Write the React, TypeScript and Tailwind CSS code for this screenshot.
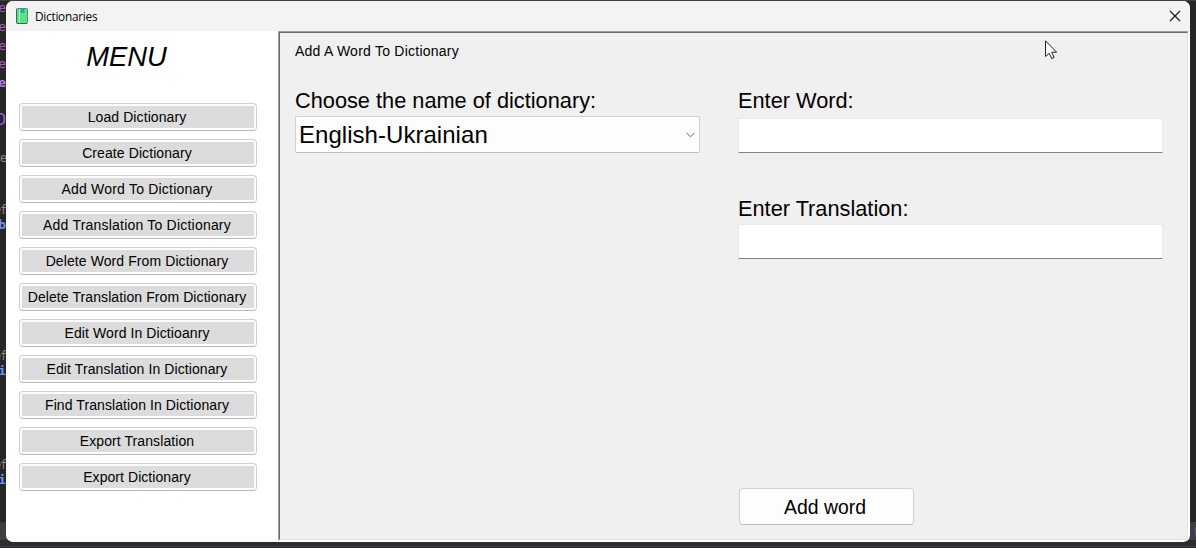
import React from "react";

const menu = [
  { label: "Load Dictionary", tracking: "tracking-[0.09px]" },
  { label: "Create Dictionary", tracking: "tracking-[0.09px]" },
  { label: "Add Word To Dictionary", tracking: "tracking-[0.2px]" },
  { label: "Add Translation To Dictionary", tracking: "tracking-[0.21px]" },
  { label: "Delete Word From Dictionary", tracking: "tracking-[0.09px]" },
  { label: "Delete Translation From Dictionary", tracking: "tracking-[0.09px]" },
  { label: "Edit Word In Dictioanry", tracking: "tracking-[0.09px]" },
  { label: "Edit Translation In Dictionary", tracking: "tracking-[0.09px]" },
  { label: "Find Translation In Dictionary", tracking: "tracking-[0.09px]" },
  { label: "Export Translation", tracking: "tracking-[0.09px]" },
  { label: "Export Dictionary", tracking: "tracking-[0.06px]" },
];

const code = [
  { text: "e", style: "top-[-1px] right-0 text-[#9a62c8]" },
  { text: "e", style: "top-[18px] right-0 text-[#9a62c8]" },
  { text: "e", style: "top-[37px] right-0 text-[#9a62c8]" },
  { text: "e", style: "top-[55px] right-0 text-[#9a62c8]" },
  { text: "e", style: "top-[74px] right-0 text-[#b27cf0] font-bold" },
  { text: "D", style: "top-[111px] right-0 text-[#9a62e8] text-[15px]" },
  { text: "te", style: "top-[149px] right-0 text-[#8a8a8a] text-[12px] tracking-[-1.2px]" },
  { text: "ef", style: "top-[201px] right-0 text-[#8a8a8a] text-[12px] tracking-[-1.2px]" },
  { text: "b", style: "top-[216px] right-0 text-[#6c95eb] font-bold" },
  { text: "ef", style: "top-[347px] right-0 text-[#8a8a8a] text-[12px] tracking-[-1.2px]" },
  { text: "i", style: "top-[362px] right-0 text-[#6c95eb] font-bold" },
  { text: "ef", style: "top-[456px] right-0 text-[#8a8a8a] text-[12px] tracking-[-1.2px]" },
  { text: "i", style: "top-[471px] right-0 text-[#6c95eb] font-bold" },
];

function Backdrop() {
  return (
    <div className="absolute inset-0 flex flex-col">
      <div className="h-px bg-[#403f42]" />
      <div className="h-[521px] bg-[#262626]" />
      <div className="h-[18px] bg-[#3d3d42]" />
      <div className="h-[6px] bg-[#2d2d31]" />
      <div className="h-px bg-[#414145]" />
      <div className="h-px bg-[#252527]" />
      <div className="absolute inset-y-0 left-0 w-[6px] overflow-hidden font-['DejaVu_Sans_Mono',monospace] text-[13px] leading-[18px]">
        {code.map((c, i) => (
          <span key={i} className={`absolute leading-[18px] ${c.style}`}>{c.text}</span>
        ))}
      </div>
      <div className="absolute top-[527px] right-0 h-[8px] w-px bg-[#5550a5]" />
    </div>
  );
}

function BookIcon() {
  return (
    <svg width="12" height="16" viewBox="0 0 12 16">
      <rect x="0.5" y="0.5" width="11" height="15" rx="1" fill="#62df82" stroke="#3f9a78" />
      <path d="M0.5 1v14M1 15.5h10" stroke="#286b61" />
      <path d="M3.5 1v13.5" stroke="#9af8a6" strokeWidth="1" />
      <path d="M5 0h3v5L6.5 3.6 5 5z" fill="#2aa9e8" stroke="#1b708e" strokeWidth="0.4" />
    </svg>
  );
}

function Field({ label, className }: { label: string; className: string }) {
  return (
    <label className={`flex w-[425px] flex-col ${className}`}>
      <span className="text-[21.75px] leading-[26px]">{label}</span>
      <input className="block h-[35px] w-[425px] border border-[#e9e9e9] border-b-[#858585] bg-white px-1 text-2xl outline-none" />
    </label>
  );
}

export default function App() {
  return (
    <div className="relative h-[548px] w-[1196px] overflow-hidden pt-px pl-[6px] font-['Liberation_Sans',Arial,sans-serif] text-black">
      <Backdrop />
      <div className="relative flex h-[541px] w-[1184px] flex-col overflow-hidden rounded-[7px] bg-white">
        <header className="flex h-[30px] shrink-0 items-center bg-[#f3f3f3] pr-[9px] pl-[10px]">
          <BookIcon />
          <span className="ml-[7px] font-['Open_Sans','Noto_Sans',sans-serif] text-[11.8px] leading-[16px] tracking-[-0.25px]">Dictionaries</span>
          <button className="ml-auto" aria-label="Close">
            <svg width="12" height="12" viewBox="0 0 12 12" fill="none" stroke="#1a1a1a" strokeWidth="1.15">
              <path d="M1 1l10 10M11 1L1 11" />
            </svg>
          </button>
        </header>
        <div className="flex min-h-0 flex-1">
          <nav className="flex w-[272px] shrink-0 flex-col pl-[13px]">
            <h1 className="mt-[9px] h-[34px] w-[215px] text-center text-[27.4px] leading-[34px] italic">MENU</h1>
            <div className="mt-[29px] flex flex-col gap-2">
              {menu.map((m) => (
                <button key={m.label} className="h-[28px] w-[238px] rounded-[4px] border border-[#d0d0d0] border-b-[#bababa] bg-[#fdfdfd] p-[2px]">
                  <span className={`flex h-[22px] items-center justify-center bg-[#dcdcdc] pt-px pr-[2px] text-[14px] leading-[21px] whitespace-nowrap ${m.tracking}`}>
                    {m.label}
                  </span>
                </button>
              ))}
            </div>
          </nav>
          <div className="mb-px flex w-[911px] border-t border-r border-b border-l border-t-[#a0a0a0] border-r-white border-b-white border-l-[#a0a0a0]">
            <main className="flex flex-1 border border-t-[#696969] border-r-[#e3e3e3] border-b-[#e3e3e3] border-l-[#696969] bg-[#f0f0f0] pl-[15px]">
              <section className="flex w-[443px] flex-col">
                <h2 className="mt-[9px] text-[14px] leading-[18px] tracking-[0.24px]">Add A Word To Dictionary</h2>
                <span className="mt-[28px] text-[21.75px] leading-[26px]">Choose the name of dictionary:</span>
                <div className="mt-[2px] flex h-[37px] w-[405px] items-center justify-between rounded-[2px] border border-[#d0d0d0] border-b-[#bdbdbd] bg-[#fdfdfd] pr-[4px] pl-[3px] text-[24px] leading-[34px] tracking-[0.04px]">
                  <span>English-Ukrainian</span>
                  <svg width="9" height="6" viewBox="0 0 9 6" fill="none" stroke="#606060" strokeWidth="1">
                    <path d="M0.5 0.8L4.5 4.8L8.5 0.8" />
                  </svg>
                </div>
              </section>
              <section className="flex flex-col items-start">
                <Field label="Enter Word:" className="mt-[55px] gap-[4px]" />
                <Field label="Enter Translation:" className="mt-[43px] gap-[2px]" />
                <button className="mt-[229px] ml-[1px] h-[37px] w-[175px] rounded-[4px] border border-[#d0d0d0] border-b-[#bdbdbd] bg-[#fdfdfd] pr-[3px] text-[19.4px] leading-[34px]">
                  Add word
                </button>
              </section>
            </main>
          </div>
        </div>
      </div>
      <svg className="absolute top-[40px] left-[1045px]" width="13" height="20" viewBox="0 0 13 20">
        <path d="M0.5 0.8V16.5L4.2 13.2L6.7 18.6L9.1 17.5L6.7 12.2H11.6Z" fill="white" stroke="#202028" strokeWidth="1" />
      </svg>
    </div>
  );
}
